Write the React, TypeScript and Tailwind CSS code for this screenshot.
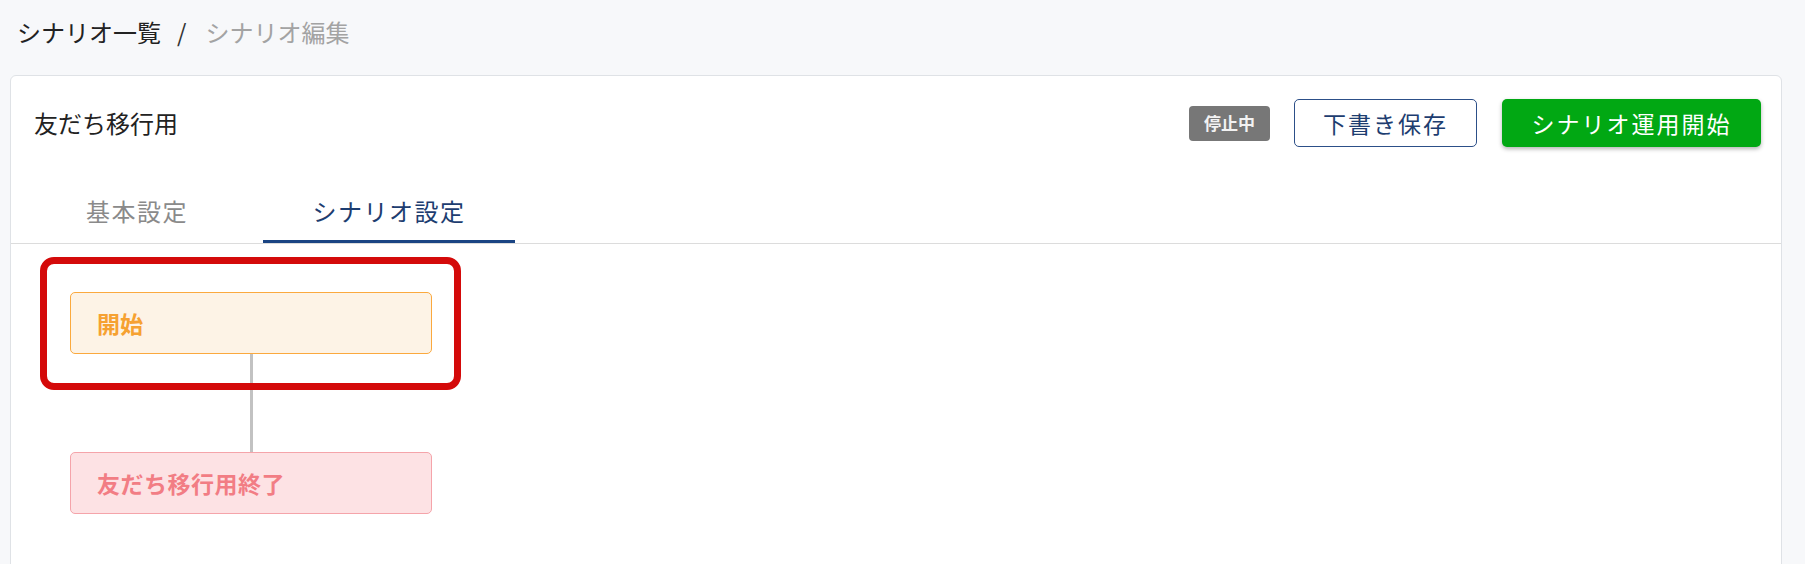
export default function App() {
  return (
    <div
      className="min-h-screen bg-[#f7f8fa] text-[#222]"
      style={{ fontFamily: '"Noto Sans CJK JP", "Noto Sans", sans-serif' }}
    >
      {/* breadcrumb */}
      <div className="h-[64px] flex items-center pl-[17px] text-[24px]">
        <span className="text-[#222]">シナリオ一覧</span>
        <span className="pl-[16px] pr-[19px] text-[#333]">/</span>
        <span className="text-[#a3a3a3]">シナリオ編集</span>
      </div>

      <div className="ml-[10px] mr-[23px] mt-[11px] bg-white border border-[#dfe2e6] rounded-[6px] min-h-[520px]">
        {/* header */}
        <div className="flex items-center justify-between pt-[23px] pl-[23px] pr-[20px]">
          <h1 className="text-[24px] leading-none text-[#222]">友だち移行用</h1>
          <div className="flex items-center">
            <span className="bg-[#777777] text-[#f2f2f2] text-[17px] font-bold rounded-[4px] h-[35px] w-[81px] flex items-center justify-center">
              停止中
            </span>
            <button className="ml-[24px] h-[48px] w-[183px] border border-[#2c4f88] rounded-[5px] text-[#1d3d70] text-[23px] tracking-[2px] bg-white">
              下書き保存
            </button>
            <button className="ml-[25px] h-[48px] w-[259px] bg-[#01a813] rounded-[5px] text-white text-[23px] tracking-[2px] shadow-[0_2px_4px_rgba(0,0,0,0.3)]">
              シナリオ運用開始
            </button>
          </div>
        </div>

        {/* tabs */}
        <div className="mt-[32px] flex border-b border-[#dcdcdc]">
          <div className="w-[252px] h-[64px] flex items-center justify-center text-[24px] tracking-[1.5px] text-[#8a8a8a]">
            基本設定
          </div>
          <div className="w-[252px] h-[64px] flex items-center justify-center text-[24px] tracking-[1.5px] text-[#1d3d70] border-b-[3px] border-[#1a4483] pt-[3px]">
            シナリオ設定
          </div>
        </div>

        {/* scenario flow */}
        <div className="pt-[48px] pl-[59px] pb-[40px]">
          <div className="relative w-[362px]">
            <div className="h-[62px] bg-[#fdf3e6] border border-[#fba93e] rounded-[5px] flex items-center pl-[26px] text-[23px] font-bold text-[#f6a131]">
              開始
            </div>
            <div className="absolute -left-[30px] -top-[35px] w-[421px] h-[133px] border-[7px] border-[#d40a0a] rounded-[14px]" />
          </div>
          <div className="w-[362px] flex justify-center">
            <div className="w-[3px] h-[98px] bg-[#c2c2c2]" />
          </div>
          <div className="w-[362px] h-[62px] bg-[#fde2e4] border border-[#f5a4aa] rounded-[5px] flex items-center pl-[26px] text-[23px] tracking-[0.5px] font-bold text-[#f27d84]">
            友だち移行用終了
          </div>
        </div>
      </div>
    </div>
  );
}
